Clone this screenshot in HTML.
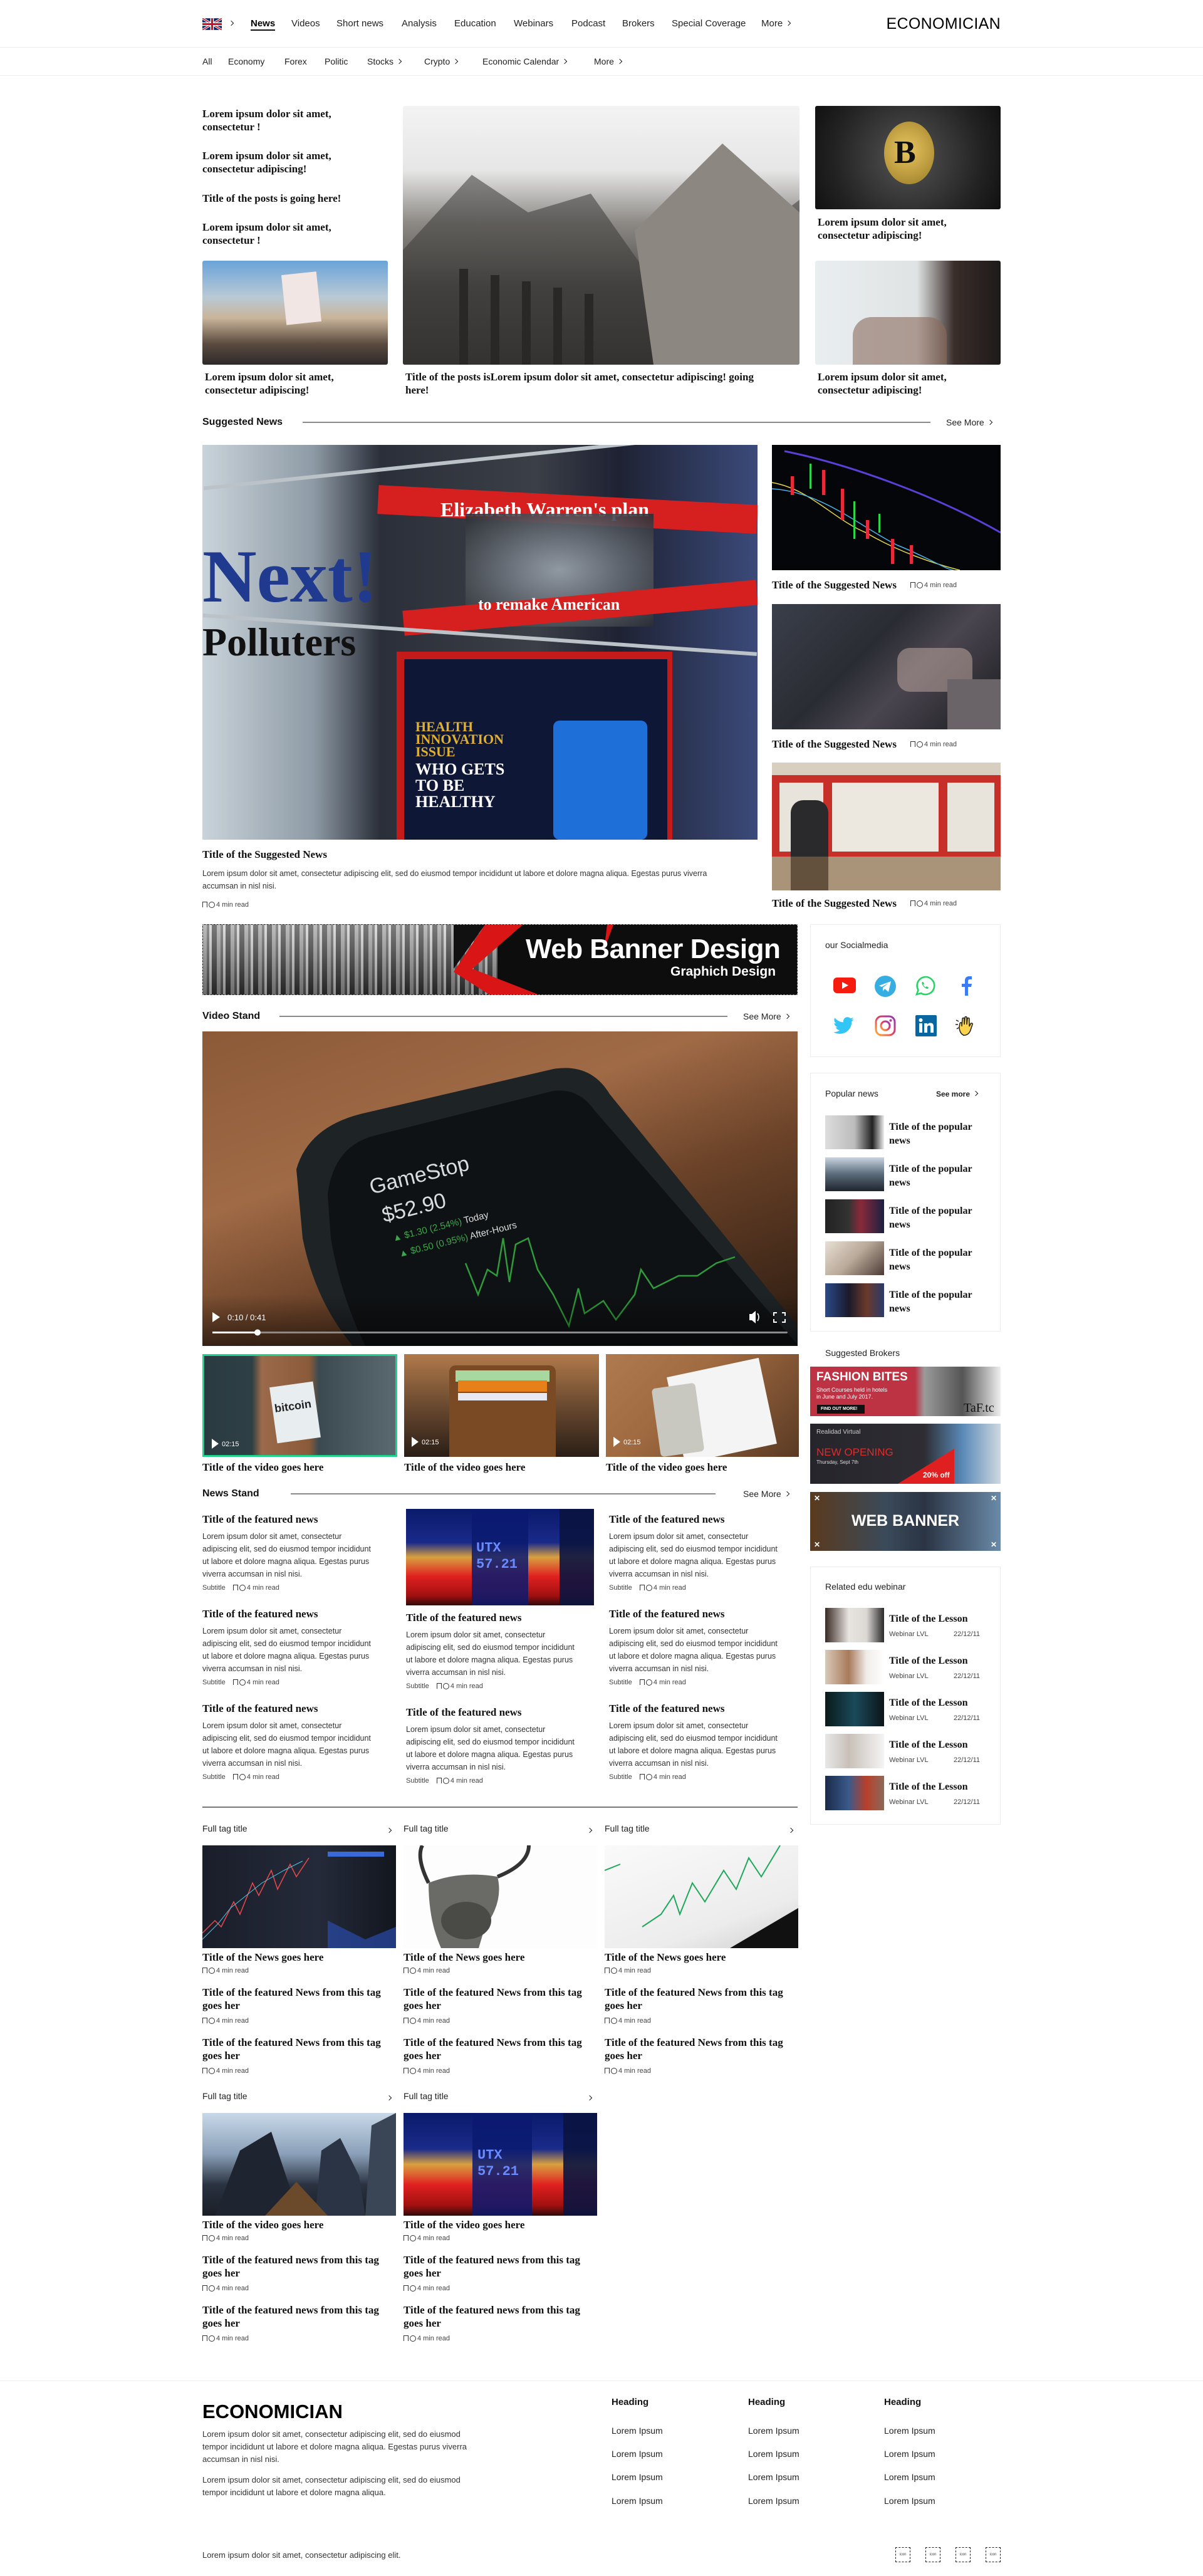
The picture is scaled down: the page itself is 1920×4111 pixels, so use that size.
<!DOCTYPE html>
<html><head><meta charset="utf-8">
<style>
*{margin:0;padding:0;box-sizing:border-box}
body{width:1920px;height:4111px;position:relative;overflow:hidden;background:#fff;font-family:"Liberation Sans",sans-serif;color:#111}
.a{position:absolute}
.st{position:absolute;font-family:"Liberation Serif",serif;font-weight:bold;font-size:17px;line-height:21px;color:#111;white-space:nowrap}
.s{position:absolute;font-size:15px;line-height:18px;color:#222;white-space:nowrap}
.hd{position:absolute;font-size:16px;font-weight:bold;line-height:20px;color:#111;white-space:nowrap}
.ln{position:absolute;height:2px;background:#8a8a8a}
.p{position:absolute;font-size:12.5px;line-height:20px;color:#333;white-space:nowrap}
.m{position:absolute;font-size:11px;line-height:14px;color:#444;white-space:nowrap}
.mi{display:inline-block;position:relative;width:22px;height:10px;vertical-align:-1px}
.mi::before{content:"";position:absolute;left:0;top:1px;width:6px;height:8px;border:1.3px solid #333;border-bottom:none}
.mi::after{content:"";position:absolute;left:10px;top:1px;width:8px;height:8px;border:1.3px solid #333;border-radius:50%}
.img{position:absolute;overflow:hidden}
.box{position:absolute;border:1px solid #ececec;background:#fff}
.chev{display:inline-block;width:6px;height:6px;border-right:1.6px solid #222;border-top:1.6px solid #222;transform:rotate(45deg);margin-left:6px;position:relative;top:-2px}
</style></head><body>

<!-- NAV -->
<svg class="a" style="left:323px;top:29px" width="31" height="19" viewBox="0 0 60 36"><rect width="60" height="36" fill="#012169"/><path d="M0,0 60,36M60,0 0,36" stroke="#fff" stroke-width="7"/><path d="M0,0 60,36M60,0 0,36" stroke="#C8102E" stroke-width="3"/><path d="M30,0V36M0,18H60" stroke="#fff" stroke-width="11"/><path d="M30,0V36M0,18H60" stroke="#C8102E" stroke-width="6"/></svg>
<span class="a" style="left:360px;top:29px"><span class="chev"></span></span>
<span class="s" style="left:400px;top:29px;font-weight:bold;color:#000;border-bottom:2px solid #111">News</span>
<span class="s" style="left:465px;top:29px">Videos</span>
<span class="s" style="left:537px;top:29px">Short news</span>
<span class="s" style="left:641px;top:29px">Analysis</span>
<span class="s" style="left:725px;top:29px">Education</span>
<span class="s" style="left:820px;top:29px">Webinars</span>
<span class="s" style="left:912px;top:29px">Podcast</span>
<span class="s" style="left:993px;top:29px">Brokers</span>
<span class="s" style="left:1072px;top:29px">Special Coverage</span>
<span class="s" style="left:1215px;top:29px">More<span class="chev"></span></span>
<span class="a" style="right:323px;top:23px;font-size:25px;line-height:30px;color:#000;letter-spacing:0.3px">ECONOMICIAN</span>
<div class="a" style="left:0;top:75px;width:1920px;height:1px;background:#eee"></div>
<span class="s" style="left:323px;top:89px;font-size:14px">All</span>
<span class="s" style="left:364px;top:89px;font-size:14px">Economy</span>
<span class="s" style="left:454px;top:89px;font-size:14px">Forex</span>
<span class="s" style="left:518px;top:89px;font-size:14px">Politic</span>
<span class="s" style="left:586px;top:89px;font-size:14px">Stocks<span class="chev"></span></span>
<span class="s" style="left:677px;top:89px;font-size:14px">Crypto<span class="chev"></span></span>
<span class="s" style="left:770px;top:89px;font-size:14px">Economic Calendar<span class="chev"></span></span>
<span class="s" style="left:948px;top:89px;font-size:14px">More<span class="chev"></span></span>
<div class="a" style="left:0;top:120px;width:1920px;height:1px;background:#eee"></div>

<!-- TOP -->
<div class="st" style="left:323px;top:171px">Lorem ipsum dolor sit amet,<br>consectetur !</div>
<div class="st" style="left:323px;top:238px">Lorem ipsum dolor sit amet,<br>consectetur adipiscing!</div>
<div class="st" style="left:323px;top:306px">Title of the posts is going here!</div>
<div class="st" style="left:323px;top:352px">Lorem ipsum dolor sit amet,<br>consectetur !</div>
<div class="img" style="left:323px;top:416px;width:296px;height:166px;border-radius:3px;background:linear-gradient(180deg,#6aa3d8 0%,#b9c9d6 35%,#c9b59a 55%,#5b4b3f 80%,#2d2a2a 100%)">
 <div class="a" style="left:130px;top:20px;width:56px;height:80px;background:#f1e6e3;transform:rotate(-6deg)"></div>
</div>
<div class="img" style="left:643px;top:169px;width:633px;height:413px;border-radius:3px;background:linear-gradient(180deg,#f3f3f3 0%,#e6e6e6 25%,#8d8a86 45%,#4a4846 70%,#2b2a29 100%)">
 <svg width="633" height="413" class="a" style="left:0;top:0"><polygon points="0,230 110,110 200,170 300,140 420,310 633,150 633,413 0,413" fill="#3d3b39" opacity=".55"/><polygon points="370,200 510,60 633,170 633,413 400,413" fill="#8c8780"/><g fill="#2a2827"><rect x="90" y="260" width="14" height="153"/><rect x="140" y="270" width="14" height="143"/><rect x="190" y="280" width="14" height="133"/><rect x="240" y="290" width="14" height="123"/><rect x="290" y="300" width="14" height="113"/></g></svg>
</div>
<div class="img" style="left:1301px;top:169px;width:296px;height:165px;border-radius:3px;background:radial-gradient(circle at 50% 50%,#555 0,#222 70%,#111 100%)">
 <div class="a" style="left:110px;top:25px;width:80px;height:100px;border-radius:50%;background:radial-gradient(circle at 45% 45%,#e7c760,#9a7a25);"></div>
 <div class="a" style="left:126px;top:45px;font:bold 52px 'Liberation Serif',serif;color:#111">B</div>
</div>
<div class="st" style="left:1305px;top:344px">Lorem ipsum dolor sit amet,<br>consectetur adipiscing!</div>
<div class="img" style="left:1301px;top:416px;width:296px;height:166px;border-radius:3px;background:linear-gradient(90deg,#e9eef1 0%,#dfe3e3 55%,#3a2d2a 75%,#1e1a1a 100%)">
 <div class="a" style="left:60px;top:90px;width:150px;height:76px;background:#8b6a5c;opacity:.6;border-radius:30px 30px 0 0"></div>
</div>
<div class="st" style="left:327px;top:591px">Lorem ipsum dolor sit amet,<br>consectetur adipiscing!</div>
<div class="st" style="left:647px;top:591px">Title of the posts isLorem ipsum dolor sit amet, consectetur adipiscing! going<br>here!</div>
<div class="st" style="left:1305px;top:591px">Lorem ipsum dolor sit amet,<br>consectetur adipiscing!</div>

<!-- SUGGESTED -->
<div class="hd" style="left:323px;top:664px">Suggested News</div>
<div class="ln" style="left:483px;top:673px;width:1002px"></div>
<div class="s" style="left:1510px;top:665px;font-size:14px">See More<span class="chev"></span></div>
<div class="img" style="left:323px;top:710px;width:886px;height:630px;background:linear-gradient(90deg,#c9d3da 0%,#8e9aa5 20%,#2a2f39 32%,#3b3f47 60%,#1e2233 75%,#3b4a7a 100%)">
 <div class="a" style="left:0;top:150px;width:280px;height:120px;font:bold 120px 'Liberation Serif',serif;color:#1f3a8f;line-height:120px">Next!</div>
 <div class="a" style="left:0;top:280px;width:280px;font:bold 64px 'Liberation Serif',serif;color:#111;line-height:70px">Polluters</div>
 <div class="a" style="left:280px;top:80px;width:606px;height:46px;background:#d62020;transform:rotate(3deg)"></div>
 <div class="a" style="left:380px;top:85px;font:bold 32px 'Liberation Serif',serif;color:#fff">Elizabeth Warren's plan</div>
 <div class="a" style="left:420px;top:110px;width:300px;height:180px;background:radial-gradient(ellipse,#9aa3ad,#2a2d33);opacity:.9"></div>
 <div class="a" style="left:320px;top:240px;width:566px;height:40px;background:#d62020;transform:rotate(-5deg)"></div>
 <div class="a" style="left:440px;top:240px;font:bold 26px 'Liberation Serif',serif;color:#fff">to remake American</div>
 <div class="a" style="left:310px;top:330px;width:440px;height:300px;background:#c41a1a"></div>
 <div class="a" style="left:322px;top:342px;width:420px;height:288px;background:#0f1736"></div>
 <div class="a" style="left:340px;top:440px;font:bold 22px 'Liberation Serif',serif;color:#e0b030;line-height:20px">HEALTH<br>INNOVATION<br>ISSUE</div>
 <div class="a" style="left:340px;top:505px;font:bold 26px 'Liberation Serif',serif;color:#fff;line-height:26px">WHO GETS<br>TO BE<br>HEALTHY</div>
 <div class="a" style="left:560px;top:440px;width:150px;height:190px;background:#1e6fd8;border-radius:10px"></div>
 <div class="a" style="left:0;top:300px;width:886px;height:6px;background:#bcc3c8;transform:rotate(4deg)"></div>
 <div class="a" style="left:0;top:20px;width:886px;height:6px;background:#bcc3c8;transform:rotate(-6deg)"></div>
</div>
<div class="st" style="left:323px;top:1353px">Title of the Suggested News</div>
<div class="p" style="left:323px;top:1384px">Lorem ipsum dolor sit amet, consectetur adipiscing elit, sed do eiusmod tempor incididunt ut labore et dolore magna aliqua. Egestas purus viverra<br>accumsan in nisl nisi.</div>
<div class="m" style="left:323px;top:1437px"><i class="mi"></i>4 min read</div>

<div class="img" style="left:1232px;top:710px;width:365px;height:200px;background:#05060a">
 <svg width="365" height="200"><path d="M0,60 C60,70 100,120 150,140 200,170 260,190 300,200" stroke="#e8d84a" fill="none" stroke-width="1.5"/><path d="M20,10 C120,30 260,80 365,140" stroke="#5a3fd8" fill="none" stroke-width="3"/><path d="M0,70 C80,75 140,130 200,160 250,180 280,200 290,200" stroke="#4ab3e8" fill="none" stroke-width="1.5"/><g fill="#e82a3a"><rect x="80" y="40" width="5" height="40"/><rect x="110" y="70" width="5" height="50"/><rect x="150" y="120" width="5" height="30"/><rect x="190" y="150" width="5" height="40"/><rect x="220" y="160" width="5" height="30"/><rect x="30" y="50" width="5" height="30"/></g><g fill="#2ad84a"><rect x="60" y="30" width="3" height="40"/><rect x="130" y="90" width="3" height="60"/><rect x="170" y="110" width="3" height="30"/></g></svg>
</div>
<div class="st" style="left:1232px;top:923px">Title of the Suggested News</div><div class="m" style="left:1453px;top:927px"><i class="mi"></i>4 min read</div>
<div class="img" style="left:1232px;top:964px;width:365px;height:200px;background:linear-gradient(135deg,#3a3f4a 0%,#2a2c33 40%,#4a4650 60%,#1a1a1e 100%)">
 <div class="a" style="left:200px;top:70px;width:120px;height:70px;background:#c8b0a6;opacity:.5;border-radius:20px"></div>
 <div class="a" style="left:280px;top:120px;width:85px;height:80px;background:#6a6468"></div>
</div>
<div class="st" style="left:1232px;top:1177px">Title of the Suggested News</div><div class="m" style="left:1453px;top:1181px"><i class="mi"></i>4 min read</div>
<div class="img" style="left:1232px;top:1217px;width:365px;height:204px;background:#d8cfc0">
 <div class="a" style="left:0;top:20px;width:365px;height:130px;background:#c73028"></div>
 <div class="a" style="left:12px;top:32px;width:70px;height:110px;background:#e8e4dc"></div>
 <div class="a" style="left:96px;top:32px;width:170px;height:110px;background:#ece8e0"></div>
 <div class="a" style="left:280px;top:32px;width:75px;height:110px;background:#e8e4dc"></div>
 <div class="a" style="left:30px;top:60px;width:60px;height:144px;background:#2a2a2c;border-radius:20px 20px 0 0"></div>
 <div class="a" style="left:0;top:150px;width:365px;height:54px;background:#8a6a4a;opacity:.6"></div>
</div>
<div class="st" style="left:1232px;top:1431px">Title of the Suggested News</div><div class="m" style="left:1453px;top:1435px"><i class="mi"></i>4 min read</div>

<!-- BANNER -->
<div class="img" style="left:323px;top:1475px;width:950px;height:113px;background:#0d0d0d;border:1px dashed #888">
 <div class="a" style="left:0;top:0;width:470px;height:113px;background:repeating-linear-gradient(90deg,#999 0 6px,#555 6px 10px,#ccc 10px 14px,#333 14px 22px)"></div>
 <div class="a" style="left:0;top:0;width:470px;height:113px;background:linear-gradient(180deg,rgba(255,255,255,.35),rgba(0,0,0,.3))"></div>
 <svg class="a" style="left:400px;top:0" width="300" height="113"><polygon points="50,0 110,0 30,70 140,113 60,113 0,75" fill="#d91515"/><polygon points="0,0 50,0 0,70" fill="#111"/><polygon points="245,0 255,0 240,40" fill="#d91515"/></svg>
 <div class="a" style="left:515px;top:14px;font:bold 44px 'Liberation Sans',sans-serif;color:#fff;letter-spacing:-0.5px;white-space:nowrap">Web Banner Design</div>
 <div class="a" style="left:746px;top:63px;font:bold 21px 'Liberation Sans',sans-serif;color:#fff;white-space:nowrap">Graphich Design</div>
</div>

<!-- SOCIAL -->
<div class="box" style="left:1293px;top:1475px;width:304px;height:212px"></div>
<div class="s" style="left:1317px;top:1499px;font-size:14px">our Socialmedia</div>
<svg class="a" style="left:1330px;top:1560px" width="36" height="25"><rect width="36" height="25" rx="6" fill="#f61c0d"/><polygon points="14,7 24,12.5 14,18" fill="#fff"/></svg>
<svg class="a" style="left:1396px;top:1557px" width="34" height="34"><circle cx="17" cy="17" r="17" fill="#37aee2"/><path d="M7,16 26,9 22,26 16,21 13,25 13,19 22,12 11,18Z" fill="#fff"/></svg>
<svg class="a" style="left:1461px;top:1557px" width="32" height="32"><path d="M16,2a14,14 0 1 1-7,26L2,30l2.5-7A14,14 0 0 1 16,2Z" fill="none" stroke="#25d366" stroke-width="2.6"/><path d="M11,10c-1,1-1,3 1,6s5,5 7,5 2-2 2-2l-3-2-1.5,1.5c-1,0-3.5-2.5-4-4l1.5-1.5-1.5-3z" fill="#25d366"/></svg>
<svg class="a" style="left:1532px;top:1557px" width="20" height="32"><path d="M13,32V18h5l1-5h-6V9c0-2 1-3 3-3h3V1h-4c-5 0-7 3-7 7v5H3v5h5v14z" fill="#3b7cf6"/></svg>
<svg class="a" style="left:1330px;top:1622px" width="34" height="30" viewBox="0 0 24 20"><path d="M23,2.5c-.8.4-1.8.6-2.7.7 1-.6 1.7-1.5 2-2.6-.9.5-1.9.9-3,1.1A4.7,4.7 0 0 0 11.3,6C7.4,5.8 4,4 1.7,1.1c-1.3,2.2-.6,5 1.5,6.3-.8,0-1.5-.2-2.1-.6 0,2.3 1.6,4.2 3.8,4.7-.7.2-1.4.2-2.1.1.6,1.9 2.4,3.3 4.4,3.3A9.5,9.5 0 0 1 0,17c2.1,1.4 4.6,2.1 7.2,2.1 8.7,0 13.5-7.2 13.5-13.5v-.6c1-.7 1.7-1.5 2.3-2.5z" fill="#33c5f5"/></svg>
<svg class="a" style="left:1396px;top:1620px" width="34" height="34"><defs><linearGradient id="ig" x1="0" y1="1" x2="1" y2="0"><stop offset="0" stop-color="#fdb032"/><stop offset=".5" stop-color="#e4405f"/><stop offset="1" stop-color="#8a3ab9"/></linearGradient></defs><rect x="2" y="2" width="30" height="30" rx="9" fill="none" stroke="url(#ig)" stroke-width="3"/><circle cx="17" cy="17" r="7" fill="none" stroke="url(#ig)" stroke-width="3"/><circle cx="25.5" cy="8.5" r="2" fill="#b53aa0"/></svg>
<svg class="a" style="left:1461px;top:1620px" width="34" height="34"><rect width="34" height="34" rx="2" fill="#0a66a0"/><rect x="6" y="13" width="5" height="15" fill="#fff"/><circle cx="8.5" cy="8" r="3" fill="#fff"/><path d="M14,13h5v2c1-1.5 2.5-2.5 5-2.5 4,0 5,2.5 5,6v9.5h-5v-8.5c0-2-.5-3-2-3s-3,1-3,3v8.5h-5z" fill="#fff"/></svg>
<svg class="a" style="left:1524px;top:1620px" width="38" height="34"><path d="M14,32c-5-2-7-8-7-13l1-6c1-2 3-1 3,1v4l1-12c0-2 3-2 3,0v9l1-11c0-2 3-2 3,0v11l1-9c0-2 3-2 3,0v12l2-4c1-2 4-1 3,1l-3,9c-2,6-7,9-12,8z" fill="#fcd34d" stroke="#222" stroke-width="1.5"/><path d="M2,8l4,2M1,15h4M3,22l3-2" stroke="#222" stroke-width="1.5"/></svg>

<!-- VIDEO STAND -->
<div class="hd" style="left:323px;top:1612px">Video Stand</div>
<div class="ln" style="left:446px;top:1621px;width:715px"></div>
<div class="s" style="left:1186px;top:1613px;font-size:14px">See More<span class="chev"></span></div>
<div class="img" style="left:323px;top:1646px;width:950px;height:502px;background:linear-gradient(160deg,#8c5a38 0%,#a06a46 35%,#6a4228 60%,#2a1a10 100%)">
 <svg width="950" height="502" class="a" style="left:0;top:0">
  <defs><linearGradient id="vg" x1="0" y1="0" x2="0" y2="1"><stop offset="0" stop-color="#000" stop-opacity="0"/><stop offset="1" stop-color="#000" stop-opacity=".5"/></linearGradient></defs>
  <path d="M150,220 Q170,150 260,130 L560,60 Q620,50 650,100 L950,470 L950,502 L240,502 Q180,430 160,330Z" fill="#1e2326"/>
  <path d="M200,260 Q210,180 280,165 L560,95 Q600,90 625,125 L950,500 L260,502 Q220,420 205,330Z" fill="#0f1214"/>
  <text x="270" y="260" font-family="Liberation Sans" font-size="34" fill="#d8dde0" transform="rotate(-14 270 260)">GameStop</text>
  <text x="290" y="305" font-family="Liberation Sans" font-size="34" fill="#d8dde0" transform="rotate(-14 290 305)">$52.90</text>
  <text x="305" y="335" font-family="Liberation Sans" font-size="15" fill="#3aa84a" transform="rotate(-14 305 335)">▲ $1.30 (2.54%) <tspan fill="#ddd">Today</tspan></text>
  <text x="315" y="360" font-family="Liberation Sans" font-size="15" fill="#3aa84a" transform="rotate(-14 315 360)">▲ $0.50 (0.95%) <tspan fill="#ddd">After-Hours</tspan></text>
  <path d="M420,370 L440,420 455,380 470,390 480,330 490,400 500,340 520,330 535,380 560,420 585,470 600,410 610,450 640,430 660,460 690,420 700,380 720,410 760,390 790,390 820,370 850,360" stroke="#2e9c3a" stroke-width="2.5" fill="none"/>
  <rect x="0" y="420" width="950" height="82" fill="url(#vg)"/>
  <polygon points="16,448 16,464 28,456" fill="#fff"/>
  <text x="40" y="461" font-family="Liberation Sans" font-size="13" fill="#fff">0:10 / 0:41</text>
  <path d="M873,451h4l6-5v20l-6-5h-4z" fill="#fff"/><path d="M886,450q4,6 0,12" stroke="#fff" fill="none" stroke-width="1.6"/>
  <path d="M912,454v-5h5M925,449h5v5M930,459v5h-5M917,464h-5v-5" stroke="#fff" fill="none" stroke-width="2"/>
  <rect x="16" y="479" width="918" height="3" rx="1.5" fill="#8a8a8a"/><rect x="16" y="479" width="72" height="3" fill="#fff"/><circle cx="88" cy="480.5" r="5" fill="#fff"/>
 </svg>
</div>
<div class="img" style="left:323px;top:2161px;width:311px;height:164px;border:3px solid #1fd48a;background:linear-gradient(90deg,#2a3a40 0%,#2e4046 25%,#9a6a4a 30%,#8a5a3a 55%,#3a4a50 60%,#5a6a70 100%)">
 <div class="a" style="left:110px;top:45px;width:70px;height:90px;background:#e8eef0;transform:rotate(-8deg)"></div>
 <div class="a" style="left:112px;top:70px;font:bold 18px 'Liberation Sans',sans-serif;color:#222;transform:rotate(-8deg)">bitcoin</div>
 <svg class="a" style="left:12px;top:130px" width="60" height="20"><polygon points="0,2 0,18 11,10" fill="#fff"/><text x="16" y="14" font-family="Liberation Sans" font-size="11" fill="#fff">02:15</text></svg>
</div>
<div class="img" style="left:645px;top:2161px;width:311px;height:164px;background:linear-gradient(180deg,#b07a4a 0%,#6a4a30 50%,#2a1e16 100%)">
 <div class="a" style="left:72px;top:18px;width:170px;height:146px;background:#7a4a24;border-radius:10px 10px 0 0"></div>
 <div class="a" style="left:82px;top:26px;width:150px;height:18px;background:#a8d8a0"></div>
 <div class="a" style="left:86px;top:42px;width:142px;height:18px;background:#e8801a"></div>
 <div class="a" style="left:86px;top:62px;width:142px;height:12px;background:#e8e8f0"></div>
 <svg class="a" style="left:12px;top:130px" width="60" height="20"><polygon points="0,2 0,18 11,10" fill="#fff"/><text x="16" y="14" font-family="Liberation Sans" font-size="11" fill="#fff">02:15</text></svg>
</div>
<div class="img" style="left:967px;top:2161px;width:308px;height:164px;background:linear-gradient(135deg,#b07a50 0%,#a06a40 40%,#5a3a24 100%)">
 <div class="a" style="left:110px;top:20px;width:150px;height:140px;background:#f4f4f4;transform:rotate(-12deg)"></div>
 <div class="a" style="left:80px;top:50px;width:70px;height:110px;background:#c8c8c0;border-radius:6px;transform:rotate(-8deg)"></div>
 <svg class="a" style="left:12px;top:130px" width="60" height="20"><polygon points="0,2 0,18 11,10" fill="#fff"/><text x="16" y="14" font-family="Liberation Sans" font-size="11" fill="#fff">02:15</text></svg>
</div>
<div class="st" style="left:323px;top:2331px">Title of the video goes here</div>
<div class="st" style="left:645px;top:2331px">Title of the video goes here</div>
<div class="st" style="left:967px;top:2331px">Title of the video goes here</div>

<!-- SIDEBAR: Popular -->
<div class="box" style="left:1293px;top:1712px;width:304px;height:413px"></div>
<div class="s" style="left:1317px;top:1736px;font-size:14px">Popular news</div>
<div class="s" style="left:1494px;top:1737px;font-size:12px;font-weight:bold">See more<span class="chev"></span></div>
<div class="img" style="left:1317px;top:1780px;width:94px;height:54px;background:linear-gradient(90deg,#ddd 0%,#bbb 50%,#222 80%,#eee 100%)"></div>
<div class="st" style="left:1419px;top:1788px;font-size:16px;line-height:22px">Title of the popular<br>news</div>
<div class="img" style="left:1317px;top:1847px;width:94px;height:54px;background:linear-gradient(180deg,#c8d4e0 0%,#5a6a7a 50%,#1e242c 100%)"></div>
<div class="st" style="left:1419px;top:1855px;font-size:16px;line-height:22px">Title of the popular<br>news</div>
<div class="img" style="left:1317px;top:1914px;width:94px;height:54px;background:linear-gradient(90deg,#222 0%,#333 40%,#8a2a3a 60%,#1a2040 100%)"></div>
<div class="st" style="left:1419px;top:1922px;font-size:16px;line-height:22px">Title of the popular<br>news</div>
<div class="img" style="left:1317px;top:1981px;width:94px;height:54px;background:linear-gradient(135deg,#e8e0d4 0%,#b8a898 50%,#4a3a34 100%)"></div>
<div class="st" style="left:1419px;top:1989px;font-size:16px;line-height:22px">Title of the popular<br>news</div>
<div class="img" style="left:1317px;top:2048px;width:94px;height:54px;background:linear-gradient(90deg,#2a4a8a 0%,#1a1a2a 40%,#6a3a2a 70%,#2a3a6a 100%)"></div>
<div class="st" style="left:1419px;top:2056px;font-size:16px;line-height:22px">Title of the popular<br>news</div>

<!-- Brokers -->
<div class="s" style="left:1317px;top:2150px;font-size:14px">Suggested Brokers</div>
<div class="img" style="left:1293px;top:2181px;width:304px;height:79px;background:linear-gradient(90deg,#bd3344 0%,#bd3344 55%,#9a9a9a 60%,#555 80%,#eee 100%)">
 <div class="a" style="left:10px;top:6px;font:bold 19px 'Liberation Sans',sans-serif;color:#fff">FASHION BITES</div>
 <div class="a" style="left:10px;top:32px;font:9px 'Liberation Sans',sans-serif;color:#fff;line-height:11px">Short Courses held in hotels<br>in June and July 2017.</div>
 <div class="a" style="left:11px;top:61px;width:76px;height:14px;background:#111;font:bold 7px 'Liberation Sans',sans-serif;color:#fff;padding:3px 6px">FIND OUT MORE!</div>
 <div class="a" style="left:245px;top:55px;font:20px 'Liberation Serif',serif;color:#111">TaF.tc</div>
</div>
<div class="img" style="left:1293px;top:2272px;width:304px;height:96px;background:linear-gradient(90deg,#26252b 0%,#2e2d33 60%,#5a8ab8 80%,#cfd8e0 100%)">
 <div class="a" style="left:10px;top:8px;font:10px 'Liberation Sans',sans-serif;color:#ccc">Realidad Virtual</div>
 <div class="a" style="left:10px;top:36px;font:17px 'Liberation Sans',sans-serif;color:#e02a2a">NEW OPENING</div>
 <div class="a" style="left:10px;top:57px;font:8px 'Liberation Sans',sans-serif;color:#ddd">Thursday, Sept 7th</div>
 <svg class="a" style="left:140px;top:40px" width="90" height="56"><polygon points="90,0 90,56 0,56" fill="#e02020"/><text x="40" y="46" font-family="Liberation Sans" font-weight="bold" font-size="12" fill="#fff">20% off</text></svg>
</div>
<div class="img" style="left:1293px;top:2381px;width:304px;height:94px;background:linear-gradient(90deg,#5a3a1e 0%,#3a4a5a 40%,#2a3444 60%,#6a8aa8 100%)">
 <div class="a" style="left:0;top:32px;width:304px;text-align:center;font:bold 25px 'Liberation Sans',sans-serif;color:#fff">WEB BANNER</div>
 <div class="a" style="left:6px;top:3px;color:#fff;font:bold 12px sans-serif">✕</div><div class="a" style="right:6px;top:3px;color:#fff;font:bold 12px sans-serif">✕</div>
 <div class="a" style="left:6px;bottom:3px;color:#fff;font:bold 12px sans-serif">✕</div><div class="a" style="right:6px;bottom:3px;color:#fff;font:bold 12px sans-serif">✕</div>
</div>

<!-- Related edu webinar -->
<div class="box" style="left:1293px;top:2500px;width:304px;height:412px"></div>
<div class="s" style="left:1317px;top:2523px;font-size:14px">Related edu webinar</div>
<div class="img" style="left:1317px;top:2566px;width:94px;height:55px;background:linear-gradient(90deg,#3a2a24,#e8e4e0 40%,#dcd8d4 70%,#2a2a2a)"></div>
<div class="st" style="left:1419px;top:2573px;font-size:16px">Title of the Lesson</div><div class="m" style="left:1419px;top:2601px">Webinar LVL</div><div class="m" style="left:1522px;top:2601px">22/12/11</div>
<div class="img" style="left:1317px;top:2633px;width:94px;height:55px;background:linear-gradient(90deg,#d8c8b8,#a87a5a 40%,#f0ece8 70%,#fff)"></div>
<div class="st" style="left:1419px;top:2640px;font-size:16px">Title of the Lesson</div><div class="m" style="left:1419px;top:2668px">Webinar LVL</div><div class="m" style="left:1522px;top:2668px">22/12/11</div>
<div class="img" style="left:1317px;top:2700px;width:94px;height:55px;background:linear-gradient(90deg,#0a1a1a,#1a4a5a 50%,#0a1418)"></div>
<div class="st" style="left:1419px;top:2707px;font-size:16px">Title of the Lesson</div><div class="m" style="left:1419px;top:2735px">Webinar LVL</div><div class="m" style="left:1522px;top:2735px">22/12/11</div>
<div class="img" style="left:1317px;top:2767px;width:94px;height:55px;background:linear-gradient(90deg,#e8e8e8,#c8c0b8 40%,#f4f4f4)"></div>
<div class="st" style="left:1419px;top:2774px;font-size:16px">Title of the Lesson</div><div class="m" style="left:1419px;top:2802px">Webinar LVL</div><div class="m" style="left:1522px;top:2802px">22/12/11</div>
<div class="img" style="left:1317px;top:2834px;width:94px;height:55px;background:linear-gradient(90deg,#1a2a4a,#3a5a8a 40%,#b8402a 70%,#8a6a5a)"></div>
<div class="st" style="left:1419px;top:2841px;font-size:16px">Title of the Lesson</div><div class="m" style="left:1419px;top:2869px">Webinar LVL</div><div class="m" style="left:1522px;top:2869px">22/12/11</div>

<!-- NEWS STAND -->
<div class="hd" style="left:323px;top:2374px">News Stand</div>
<div class="ln" style="left:464px;top:2383px;width:678px"></div>
<div class="s" style="left:1186px;top:2375px;font-size:14px">See More<span class="chev"></span></div>

<div class="st" style="left:323px;top:2414px">Title of the featured news</div>
<div class="p" style="left:323px;top:2442px">Lorem ipsum dolor sit amet, consectetur<br>adipiscing elit, sed do eiusmod tempor incididunt<br>ut labore et dolore magna aliqua. Egestas purus<br>viverra accumsan in nisl nisi.</div>
<div class="m" style="left:323px;top:2527px">Subtitle &nbsp;&nbsp; <i class="mi"></i>4 min read</div>
<div class="st" style="left:323px;top:2565px">Title of the featured news</div>
<div class="p" style="left:323px;top:2593px">Lorem ipsum dolor sit amet, consectetur<br>adipiscing elit, sed do eiusmod tempor incididunt<br>ut labore et dolore magna aliqua. Egestas purus<br>viverra accumsan in nisl nisi.</div>
<div class="m" style="left:323px;top:2678px">Subtitle &nbsp;&nbsp; <i class="mi"></i>4 min read</div>
<div class="st" style="left:323px;top:2716px">Title of the featured news</div>
<div class="p" style="left:323px;top:2744px">Lorem ipsum dolor sit amet, consectetur<br>adipiscing elit, sed do eiusmod tempor incididunt<br>ut labore et dolore magna aliqua. Egestas purus<br>viverra accumsan in nisl nisi.</div>
<div class="m" style="left:323px;top:2829px">Subtitle &nbsp;&nbsp; <i class="mi"></i>4 min read</div>

<div class="img" style="left:648px;top:2408px;width:300px;height:154px;background:linear-gradient(180deg,#0a1a6a 0%,#1a2a8a 35%,#d8a040 50%,#e02020 70%,#a01010 90%,#300a0a 100%)">
 <div class="a" style="left:105px;top:0;width:90px;height:154px;background:#0a1a70;opacity:.85"></div>
 <div class="a" style="left:245px;top:0;width:55px;height:154px;background:#0a1440;opacity:.9"></div>
 <div class="a" style="left:112px;top:50px;font:bold 22px 'Liberation Mono',monospace;color:#6a8aff;line-height:26px">UTX<br>57.21</div>
</div>
<div class="st" style="left:648px;top:2571px">Title of the featured news</div>
<div class="p" style="left:648px;top:2599px">Lorem ipsum dolor sit amet, consectetur<br>adipiscing elit, sed do eiusmod tempor incididunt<br>ut labore et dolore magna aliqua. Egestas purus<br>viverra accumsan in nisl nisi.</div>
<div class="m" style="left:648px;top:2684px">Subtitle &nbsp;&nbsp; <i class="mi"></i>4 min read</div>
<div class="st" style="left:648px;top:2722px">Title of the featured news</div>
<div class="p" style="left:648px;top:2750px">Lorem ipsum dolor sit amet, consectetur<br>adipiscing elit, sed do eiusmod tempor incididunt<br>ut labore et dolore magna aliqua. Egestas purus<br>viverra accumsan in nisl nisi.</div>
<div class="m" style="left:648px;top:2835px">Subtitle &nbsp;&nbsp; <i class="mi"></i>4 min read</div>

<div class="st" style="left:972px;top:2414px">Title of the featured news</div>
<div class="p" style="left:972px;top:2442px">Lorem ipsum dolor sit amet, consectetur<br>adipiscing elit, sed do eiusmod tempor incididunt<br>ut labore et dolore magna aliqua. Egestas purus<br>viverra accumsan in nisl nisi.</div>
<div class="m" style="left:972px;top:2527px">Subtitle &nbsp;&nbsp; <i class="mi"></i>4 min read</div>
<div class="st" style="left:972px;top:2565px">Title of the featured news</div>
<div class="p" style="left:972px;top:2593px">Lorem ipsum dolor sit amet, consectetur<br>adipiscing elit, sed do eiusmod tempor incididunt<br>ut labore et dolore magna aliqua. Egestas purus<br>viverra accumsan in nisl nisi.</div>
<div class="m" style="left:972px;top:2678px">Subtitle &nbsp;&nbsp; <i class="mi"></i>4 min read</div>
<div class="st" style="left:972px;top:2716px">Title of the featured news</div>
<div class="p" style="left:972px;top:2744px">Lorem ipsum dolor sit amet, consectetur<br>adipiscing elit, sed do eiusmod tempor incididunt<br>ut labore et dolore magna aliqua. Egestas purus<br>viverra accumsan in nisl nisi.</div>
<div class="m" style="left:972px;top:2829px">Subtitle &nbsp;&nbsp; <i class="mi"></i>4 min read</div>

<!-- TAG SECTIONS -->
<div class="ln" style="left:323px;top:2883px;width:950px;background:#777"></div>
<div class="s" style="left:323px;top:2909px;font-size:14px">Full tag title</div><span class="a" style="left:612px;top:2913px"><span class="chev"></span></span>
<div class="s" style="left:644px;top:2909px;font-size:14px">Full tag title</div><span class="a" style="left:932px;top:2913px"><span class="chev"></span></span>
<div class="s" style="left:965px;top:2909px;font-size:14px">Full tag title</div><span class="a" style="left:1253px;top:2913px"><span class="chev"></span></span>

<div class="img" style="left:323px;top:2945px;width:309px;height:164px;background:linear-gradient(90deg,#1a1e2a 0%,#252a3a 60%,#12161e 100%)">
 <svg width="309" height="164"><path d="M0,140 L20,120 30,130 50,90 60,110 80,60 90,80 110,40 120,70 140,30 150,50 170,20" stroke="#e84a4a" fill="none" stroke-width="1.5"/><path d="M0,150 L25,125 45,100 70,80 95,60 130,40 160,25" stroke="#4ac8e8" fill="none" stroke-width="1"/><rect x="200" y="10" width="90" height="8" fill="#3a6ad8"/><path d="M200,120 L260,150 309,130 309,164 200,164Z" fill="#2a4aa8" opacity=".7"/></svg>
</div>
<div class="img" style="left:644px;top:2945px;width:309px;height:164px;background:#fdfdfd">
 <svg width="309" height="164"><path d="M40,60 Q20,20 30,0 M150,50 Q200,30 200,0" stroke="#333" stroke-width="6" fill="none"/><path d="M40,60 Q90,40 150,50 Q160,90 130,130 L120,164 L60,164 Q40,120 40,60Z" fill="#6a6a66"/><ellipse cx="100" cy="120" rx="40" ry="30" fill="#4a4a46"/></svg>
</div>
<div class="img" style="left:965px;top:2945px;width:309px;height:164px;background:linear-gradient(160deg,#fafafa 0%,#ececec 70%,#cfcfcf 100%)">
 <svg width="309" height="164"><path d="M0,40 L25,30 M60,130 L90,110 110,80 120,110 140,60 160,90 190,40 210,70 230,20 250,50 280,0" stroke="#1ea85a" fill="none" stroke-width="2"/><path d="M200,164 L309,100 309,164Z" fill="#111"/></svg>
</div>

<div class="st" style="left:323px;top:3113px">Title of the News goes here</div><div class="m" style="left:323px;top:3138px"><i class="mi"></i>4 min read</div>
<div class="st" style="left:323px;top:3169px">Title of the featured News from this tag<br>goes her</div><div class="m" style="left:323px;top:3218px"><i class="mi"></i>4 min read</div>
<div class="st" style="left:323px;top:3249px">Title of the featured News from this tag<br>goes her</div><div class="m" style="left:323px;top:3298px"><i class="mi"></i>4 min read</div>
<div class="st" style="left:644px;top:3113px">Title of the News goes here</div><div class="m" style="left:644px;top:3138px"><i class="mi"></i>4 min read</div>
<div class="st" style="left:644px;top:3169px">Title of the featured News from this tag<br>goes her</div><div class="m" style="left:644px;top:3218px"><i class="mi"></i>4 min read</div>
<div class="st" style="left:644px;top:3249px">Title of the featured News from this tag<br>goes her</div><div class="m" style="left:644px;top:3298px"><i class="mi"></i>4 min read</div>
<div class="st" style="left:965px;top:3113px">Title of the News goes here</div><div class="m" style="left:965px;top:3138px"><i class="mi"></i>4 min read</div>
<div class="st" style="left:965px;top:3169px">Title of the featured News from this tag<br>goes her</div><div class="m" style="left:965px;top:3218px"><i class="mi"></i>4 min read</div>
<div class="st" style="left:965px;top:3249px">Title of the featured News from this tag<br>goes her</div><div class="m" style="left:965px;top:3298px"><i class="mi"></i>4 min read</div>

<div class="s" style="left:323px;top:3336px;font-size:14px">Full tag title</div><span class="a" style="left:612px;top:3340px"><span class="chev"></span></span>
<div class="s" style="left:644px;top:3336px;font-size:14px">Full tag title</div><span class="a" style="left:932px;top:3340px"><span class="chev"></span></span>

<div class="img" style="left:323px;top:3372px;width:309px;height:164px;background:linear-gradient(180deg,#c8d8e8 0%,#8aa0b8 40%,#2a3240 70%,#1a1e26 100%)">
 <svg width="309" height="164"><polygon points="20,164 60,60 110,30 140,120 120,164" fill="#1e2430"/><polygon points="180,164 190,60 220,40 250,100 260,164" fill="#2a3444"/><polygon points="260,164 270,20 309,0 309,164" fill="#3a4656"/><polygon points="100,164 150,110 200,164" fill="#6a4a2a"/></svg>
</div>
<div class="img" style="left:644px;top:3372px;width:309px;height:164px;background:linear-gradient(180deg,#0a1a6a 0%,#1a2a8a 35%,#d8a040 50%,#e02020 70%,#a01010 90%,#300a0a 100%)">
 <div class="a" style="left:110px;top:0;width:95px;height:164px;background:#0a1a70;opacity:.85"></div>
 <div class="a" style="left:255px;top:0;width:54px;height:164px;background:#0a1440;opacity:.9"></div>
 <div class="a" style="left:118px;top:55px;font:bold 22px 'Liberation Mono',monospace;color:#6a8aff;line-height:26px">UTX<br>57.21</div>
</div>
<div class="st" style="left:323px;top:3540px">Title of the video goes here</div><div class="m" style="left:323px;top:3565px"><i class="mi"></i>4 min read</div>
<div class="st" style="left:323px;top:3596px">Title of the featured news from this tag<br>goes her</div><div class="m" style="left:323px;top:3645px"><i class="mi"></i>4 min read</div>
<div class="st" style="left:323px;top:3676px">Title of the featured news from this tag<br>goes her</div><div class="m" style="left:323px;top:3725px"><i class="mi"></i>4 min read</div>
<div class="st" style="left:644px;top:3540px">Title of the video goes here</div><div class="m" style="left:644px;top:3565px"><i class="mi"></i>4 min read</div>
<div class="st" style="left:644px;top:3596px">Title of the featured news from this tag<br>goes her</div><div class="m" style="left:644px;top:3645px"><i class="mi"></i>4 min read</div>
<div class="st" style="left:644px;top:3676px">Title of the featured news from this tag<br>goes her</div><div class="m" style="left:644px;top:3725px"><i class="mi"></i>4 min read</div>

<!-- FOOTER -->
<div class="a" style="left:0;top:3799px;width:1920px;height:1px;background:#eee"></div>
<div class="a" style="left:323px;top:3832px;font-size:31px;font-weight:bold;line-height:34px;color:#000">ECONOMICIAN</div>
<div class="p" style="left:323px;top:3875px;font-size:13px">Lorem ipsum dolor sit amet, consectetur adipiscing elit, sed do eiusmod<br>tempor incididunt ut labore et dolore magna aliqua. Egestas purus viverra<br>accumsan in nisl nisi.</div>
<div class="p" style="left:323px;top:3948px;font-size:13px">Lorem ipsum dolor sit amet, consectetur adipiscing elit, sed do eiusmod<br>tempor incididunt ut labore et dolore magna aliqua.</div>
<div class="hd" style="left:976px;top:3824px;font-size:15px">Heading</div>
<div class="hd" style="left:1194px;top:3824px;font-size:15px">Heading</div>
<div class="hd" style="left:1411px;top:3824px;font-size:15px">Heading</div>
<div class="s" style="left:976px;top:3870px;font-size:14px">Lorem Ipsum</div><div class="s" style="left:1194px;top:3870px;font-size:14px">Lorem Ipsum</div><div class="s" style="left:1411px;top:3870px;font-size:14px">Lorem Ipsum</div>
<div class="s" style="left:976px;top:3907px;font-size:14px">Lorem Ipsum</div><div class="s" style="left:1194px;top:3907px;font-size:14px">Lorem Ipsum</div><div class="s" style="left:1411px;top:3907px;font-size:14px">Lorem Ipsum</div>
<div class="s" style="left:976px;top:3944px;font-size:14px">Lorem Ipsum</div><div class="s" style="left:1194px;top:3944px;font-size:14px">Lorem Ipsum</div><div class="s" style="left:1411px;top:3944px;font-size:14px">Lorem Ipsum</div>
<div class="s" style="left:976px;top:3982px;font-size:14px">Lorem Ipsum</div><div class="s" style="left:1194px;top:3982px;font-size:14px">Lorem Ipsum</div><div class="s" style="left:1411px;top:3982px;font-size:14px">Lorem Ipsum</div>
<div class="p" style="left:323px;top:4068px;font-size:13px">Lorem ipsum dolor sit amet, consectetur adipiscing elit.</div>
<div class="a" style="left:1429px;top:4065px;width:24px;height:24px;border:1px dashed #222;font-size:6px;line-height:22px;text-align:center;color:#444">icon</div>
<div class="a" style="left:1477px;top:4065px;width:24px;height:24px;border:1px dashed #222;font-size:6px;line-height:22px;text-align:center;color:#444">icon</div>
<div class="a" style="left:1525px;top:4065px;width:24px;height:24px;border:1px dashed #222;font-size:6px;line-height:22px;text-align:center;color:#444">icon</div>
<div class="a" style="left:1573px;top:4065px;width:24px;height:24px;border:1px dashed #222;font-size:6px;line-height:22px;text-align:center;color:#444">icon</div>
</body></html>
